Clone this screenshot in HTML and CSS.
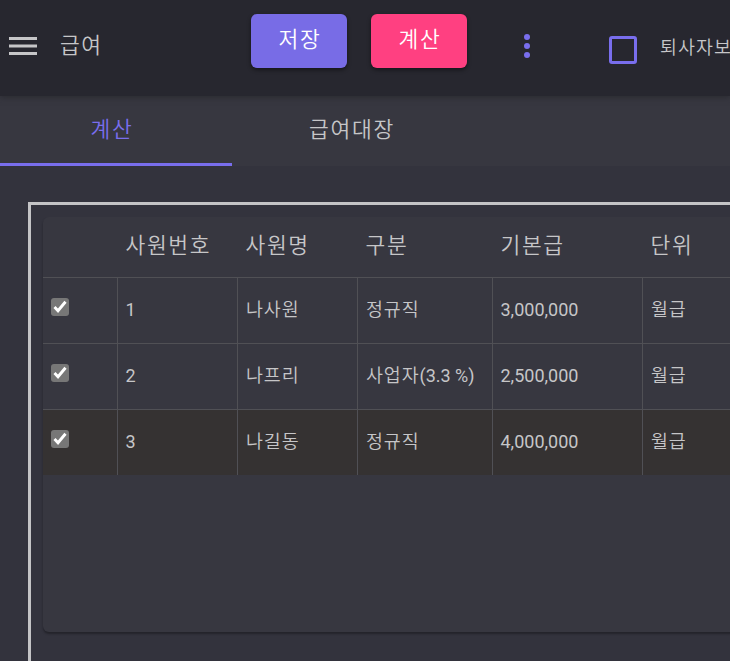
FILE: index.html
```html
<!DOCTYPE html>
<html lang="ko">
<head>
<meta charset="utf-8">
<title>급여</title>
<link rel="stylesheet" href="styles.css">
</head>
<body>
<header class="toolbar">
  <svg class="menu" width="28" height="18" viewBox="0 0 28 18"><path d="M0 0h28v3H0zM0 7.5h28v3H0zM0 15h28v3H0z" fill="currentColor"/></svg>
  <h1 class="title">급여</h1>
  <button class="btn save">저장</button>
  <button class="btn calc">계산</button>
  <svg class="more" width="6" height="24" viewBox="0 0 6 24"><circle cx="3" cy="3" r="3"/><circle cx="3" cy="12" r="3"/><circle cx="3" cy="21" r="3"/></svg>
  <span class="outline-check"></span>
  <span class="check-label">퇴사자보</span>
</header>
<nav class="tabs">
  <a class="tab active">계산</a>
  <a class="tab">급여대장</a>
</nav>
<main class="panel">
  <section class="card">
    <div class="row head"><span></span><span>사원번호</span><span>사원명</span><span>구분</span><span>기본급</span><span>단위</span></div>
    <div class="row"><span class="pick"><i class="tick"><svg viewBox="0 0 18 18"><path d="M3.5 9l3.5 3.7L14.5 3.8"/></svg></i></span><span>1</span><span>나사원</span><span>정규직</span><span>3,000,000</span><span>월급</span></div>
    <div class="row"><span class="pick"><i class="tick"><svg viewBox="0 0 18 18"><path d="M3.5 9l3.5 3.7L14.5 3.8"/></svg></i></span><span>2</span><span>나프리</span><span>사업자<b>(3.3 %)</b></span><span>2,500,000</span><span>월급</span></div>
    <div class="row selected"><span class="pick"><i class="tick"><svg viewBox="0 0 18 18"><path d="M3.5 9l3.5 3.7L14.5 3.8"/></svg></i></span><span>3</span><span>나길동</span><span>정규직</span><span>4,000,000</span><span>월급</span></div>
  </section>
</main>
</body>
</html>
```
FILE: styles.css
```css
* { box-sizing: border-box; }
body {
  margin: 0;
  width: 730px;
  height: 661px;
  overflow: hidden;
  background: #33333d;
  color: #c6c6c8;
  font-family: Roboto, "Noto Sans CJK KR", sans-serif;
  font-size: 18px;
}
.toolbar {
  position: relative;
  z-index: 1;
  display: flex;
  align-items: flex-start;
  height: 96px;
  overflow-x: clip;
  background: #27272f;
  box-shadow: 0 1px 6px rgba(39, 40, 44, .9);
  white-space: nowrap;
}
.menu { flex: none; margin: 37px 0 0 9px; }
.title {
  flex: none;
  width: 191px;
  margin: 31px 0 0 23px;
  font-size: 21.5px;
  font-weight: 350;
  line-height: 30px;
  letter-spacing: 1.5px;
}
.btn {
  flex: none;
  width: 96px;
  height: 54px;
  margin: 14px 24px 0 0;
  padding: 0 0 8px 2px;
  border: 0;
  border-radius: 6px;
  color: #fff;
  font: 350 21.5px Roboto, "Noto Sans CJK KR", sans-serif;
  letter-spacing: 1.6px;
  box-shadow: 0 2px 4px rgba(0, 0, 0, .45);
}
.save { background: #786ce6; }
.calc { background: #ff4081; }
.more { flex: none; margin: 34px 0 0 33px; fill: #796eed; }
.outline-check {
  flex: none;
  width: 28px;
  height: 28px;
  margin: 36px 0 0 79px;
  border: 3px solid #796eed;
  border-radius: 3px;
}
.check-label { flex: none; margin: 35px 0 0 23px; line-height: 26px; font-size: 18.4px; letter-spacing: 1.1px; font-weight: 350; }
.tabs { display: flex; height: 70px; background: #373740; }
.tab {
  width: 232px;
  height: 70px;
  padding: 0 8px 0 0;
  text-align: center;
  font-size: 21.5px;
  font-weight: 350;
  line-height: 67px;
  letter-spacing: 1.7px;
}
.tab + .tab { width: 240px; padding: 0; }
.active { color: #796eed; border-bottom: 3px solid #796eed; }
.panel {
  width: 730px;
  height: 459px;
  margin: 36px 0 0 28px;
  padding: 12px;
  border: 3px solid #c4c4c6;
  border-bottom: 0;
}
.card {
  height: 415px;
  border-radius: 6px;
  background: #373740;
  box-shadow: 0 2px 2px rgba(25, 25, 30, .6);
}
.row {
  display: grid;
  grid-template-columns: 74px 120px 120px 135px 150px 1fr;
  height: 66px;
  line-height: 63px;
  border-top: 1px solid #505055;
  font-weight: 400;
}
.row span { padding-left: 7.5px; border-left: 1px solid #505055; white-space: nowrap; }
.row span:first-child { padding-left: 8px; border-left: 0; }
.row span:nth-child(3), .row span:nth-child(4), .row span:nth-child(6) { padding-left: 8px; font-size: 18.4px; letter-spacing: .9px; font-weight: 350; }
.row b { font-size: 18px; font-weight: 400; letter-spacing: 0; }
.row.head {
  height: 60px;
  border-top: 0;
  line-height: 58px;
}
.row.head span:nth-child(n) { border: 0; padding-left: 8.6px; font-size: 21.5px; font-weight: 350; letter-spacing: 1.6px; }
.selected { background: #353232; }
.pick { display: flex; padding-top: 20px; }
.tick { width: 18px; height: 18px; border-radius: 3px; background: #777; }
.tick svg { display: block; width: 18px; height: 18px; fill: none; stroke: #fff; stroke-width: 2.9; }
```
